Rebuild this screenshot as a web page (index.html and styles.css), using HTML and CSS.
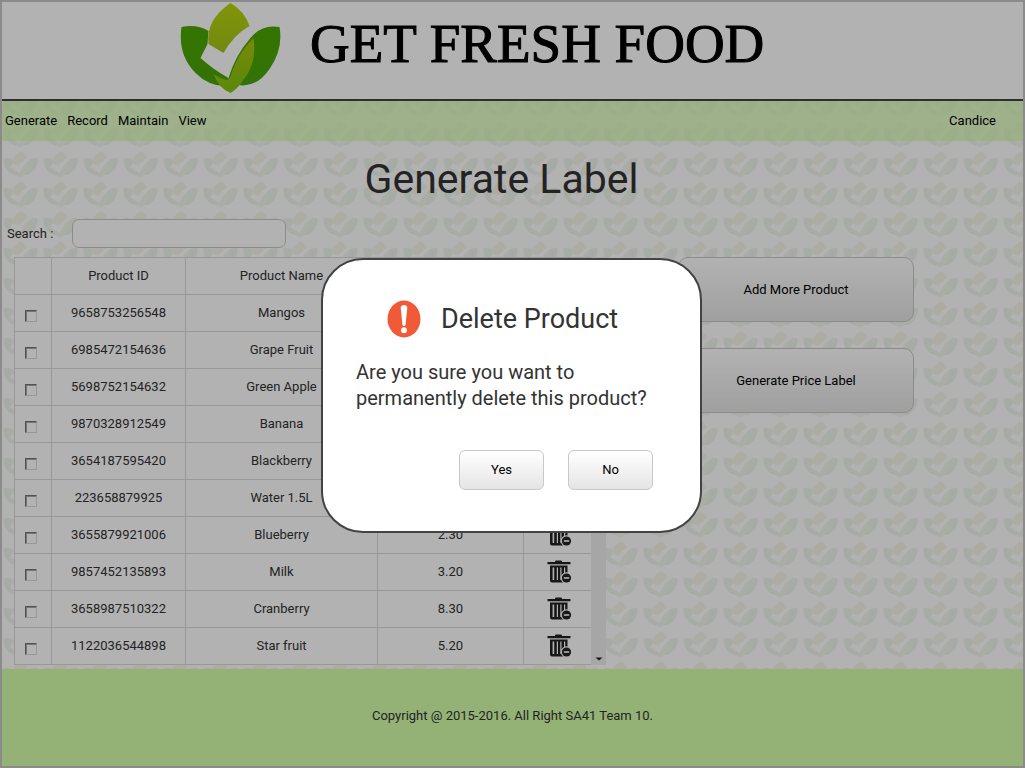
FILE: index.html
```html
<!DOCTYPE html>
<html lang="en">
<head>
<meta charset="utf-8">
<title>Get Fresh Food - Generate Label</title>
<link rel="stylesheet" href="styles.css">
</head>
<body>
<svg class="defs" aria-hidden="true">
  <symbol id="trash" viewBox="0 0 25 23">
    <path fill="#222" d="M8 2V1.500Q8 .5 9.500.5H13.500Q15 .5 15 1.500V2H23.500V4.200H.5V2Z"/>
    <path fill="#222" fill-rule="evenodd" d="M3 5.500H20.500V20Q20.500 22.500 18.500 22.500H5Q3 22.500 3 20.500ZM5.600 7.500V20H7.200V7.500ZM9.800 7.500V20H11V7.500ZM13.300 7.500V20H14.500V7.500ZM17 7.500V20H18.200V7.500Z"/>
    <circle cx="19.500" cy="18" r="5.800" fill="#fff"/>
    <circle cx="19.500" cy="18" r="4.600" fill="#222"/>
    <path stroke="#fff" stroke-width="1.600" d="M16.800 18H22.200"/>
  </symbol>
</svg>
<div class="page">
  <header class="banner">
    <svg class="logo" viewBox="0 0 100 92" role="img" aria-label="Get Fresh Food logo">
      <defs>
        <linearGradient id="lime" x1="0" y1="0" x2="0" y2="1"><stop offset="0" stop-color="#b9d60c"/><stop offset="1" stop-color="#a4c41a"/></linearGradient>
        <linearGradient id="green" x1="0" y1="0" x2="0" y2="1"><stop offset="0" stop-color="#4aa800"/><stop offset="1" stop-color="#48a40c"/></linearGradient>
        <linearGradient id="stem" x1="0" y1="0" x2="0" y2="1"><stop offset="0" stop-color="#b0c40c"/><stop offset="1" stop-color="#80c410"/></linearGradient>
      </defs>
      <path fill="url(#green)" d="M1 25Q17 22 28 29L27 42L20 56Q32 67 48 76L50 84Q30 86 15 71Q-3 53 1 25Z"/>
      <path fill="url(#green)" d="M99 25Q81 22 70 36Q55 53 48 76L58 83Q76 86 89 67Q103 47 99 25Z"/>
      <path fill="url(#stem)" d="M73 36Q77 62 62 79Q57 87 50 91Q38 86 33 72Q40 77 47 78L49 77Q57 51 73 36Z"/>
      <path fill="url(#lime)" d="M50 1Q64 9 69 24Q53 33 43 51L28 42Q25 18 50 1Z"/>
    </svg>
    <span class="brand">GET FRESH FOOD</span>
  </header>
  <nav class="menu">
    <ul class="menu-links">
      <li><a href="#generate">Generate</a></li>
      <li><a href="#record">Record</a></li>
      <li><a href="#maintain">Maintain</a></li>
      <li><a href="#view">View</a></li>
    </ul>
    <a class="user" href="#account">Candice</a>
  </nav>
  <main class="content">
    <h1>Generate Label</h1>
    <div class="search">
      <label for="search">Search :</label>
      <input id="search" type="text">
    </div>
    <div class="columns">
      <div class="list">
        <table>
          <colgroup><col class="c-check"><col class="c-id"><col class="c-name"><col class="c-price"><col class="c-delete"></colgroup>
          <thead>
            <tr><th></th><th>Product ID</th><th>Product Name</th><th>Price</th><th></th></tr>
          </thead>
          <tbody>
            <tr><td><input type="checkbox" aria-label="Mangos"></td><td>9658753256548</td><td>Mangos</td><td></td><td><button class="trash" aria-label="Delete Mangos"><svg><use href="#trash"/></svg></button></td></tr>
            <tr><td><input type="checkbox" aria-label="Grape Fruit"></td><td>6985472154636</td><td>Grape Fruit</td><td></td><td><button class="trash" aria-label="Delete Grape Fruit"><svg><use href="#trash"/></svg></button></td></tr>
            <tr><td><input type="checkbox" aria-label="Green Apple"></td><td>5698752154632</td><td>Green Apple</td><td></td><td><button class="trash" aria-label="Delete Green Apple"><svg><use href="#trash"/></svg></button></td></tr>
            <tr><td><input type="checkbox" aria-label="Banana"></td><td>9870328912549</td><td>Banana</td><td></td><td><button class="trash" aria-label="Delete Banana"><svg><use href="#trash"/></svg></button></td></tr>
            <tr><td><input type="checkbox" aria-label="Blackberry"></td><td>3654187595420</td><td>Blackberry</td><td></td><td><button class="trash" aria-label="Delete Blackberry"><svg><use href="#trash"/></svg></button></td></tr>
            <tr><td><input type="checkbox" aria-label="Water 1.5L"></td><td>223658879925</td><td>Water 1.5L</td><td></td><td><button class="trash" aria-label="Delete Water 1.5L"><svg><use href="#trash"/></svg></button></td></tr>
            <tr><td><input type="checkbox" aria-label="Blueberry"></td><td>3655879921006</td><td>Blueberry</td><td>2.30</td><td><button class="trash" aria-label="Delete Blueberry"><svg><use href="#trash"/></svg></button></td></tr>
            <tr><td><input type="checkbox" aria-label="Milk"></td><td>9857452135893</td><td>Milk</td><td>3.20</td><td><button class="trash" aria-label="Delete Milk"><svg><use href="#trash"/></svg></button></td></tr>
            <tr><td><input type="checkbox" aria-label="Cranberry"></td><td>3658987510322</td><td>Cranberry</td><td>8.30</td><td><button class="trash" aria-label="Delete Cranberry"><svg><use href="#trash"/></svg></button></td></tr>
            <tr><td><input type="checkbox" aria-label="Star fruit"></td><td>1122036544898</td><td>Star fruit</td><td>5.20</td><td><button class="trash" aria-label="Delete Star fruit"><svg><use href="#trash"/></svg></button></td></tr>
          </tbody>
        </table>
        <div class="scrollbar" aria-hidden="true">
          <svg viewBox="0 0 8 4"><path fill="#222" d="M4 .5L7.500 3.500H.5Z"/></svg>
          <svg viewBox="0 0 8 4"><path fill="#222" d="M.5.5H7.500L4 3.500Z"/></svg>
        </div>
      </div>
      <div class="actions">
        <button class="btn large">Add More Product</button>
        <button class="btn large">Generate Price Label</button>
      </div>
    </div>
  </main>
  <footer class="footer">Copyright @ 2015-2016. All Right SA41 Team 10.</footer>
</div>
<div class="overlay">
  <section class="dialog" role="dialog" aria-modal="true" aria-labelledby="dialog-title">
    <div class="dialog-head">
      <svg class="alert" viewBox="0 0 34 38" aria-hidden="true">
        <ellipse cx="17" cy="19" rx="16.500" ry="18.500" fill="#f05a38"/>
        <path fill="#fff" d="M13.700 7.500Q14 5 17 5T20.300 7.500L18.600 24.500Q18.400 26 17 26T15.400 24.500Z"/>
        <ellipse cx="17" cy="30.300" rx="2.900" ry="3" fill="#fff"/>
      </svg>
      <h2 id="dialog-title">Delete Product</h2>
    </div>
    <p>Are you sure you want to permanently delete this product?</p>
    <div class="dialog-buttons">
      <button class="btn">Yes</button>
      <button class="btn">No</button>
    </div>
  </section>
</div>
</body>
</html>
```
FILE: styles.css
```css
* { box-sizing: border-box; }

body {
  margin: 0;
  color: #333;
  font: 13px/16px Roboto, "Liberation Sans", sans-serif;
  background: #fff url("data:image/svg+xml,%3Csvg xmlns='http://www.w3.org/2000/svg' width='40' height='30'%3E%3Cg transform='translate(3 1) scale(.35 .29)' opacity='.08'%3E%3Cpath fill='%23207a10' d='M2 25Q17 22 28 29L27 42L20 56Q32 67 48 76L47 84Q30 85 17 72Q-1 53 2 25Z'/%3E%3Cpath fill='%23207a10' d='M98 25Q81 22 70 36Q55 53 48 76L58 83Q76 84 88 66Q101 47 98 25Z'/%3E%3Cpath fill='%2370a020' d='M73 36Q77 62 62 79Q57 87 50 91Q38 86 33 72Q40 77 47 78L49 77Q57 51 73 36Z'/%3E%3Cpath fill='%23909800' d='M50 1Q64 9 69 24Q53 33 43 51L28 42Q25 18 50 1Z'/%3E%3C/g%3E%3C/svg%3E");
}

h1, h2, p, ul { margin: 0; padding: 0; font-weight: 400; }
a { color: #000; text-decoration: none; }
button, input { font: inherit; margin: 0; }

.defs { position: absolute; width: 0; height: 0; }

.page {
  display: flex;
  flex-direction: column;
  min-height: 100vh;
  border: 2px solid #c8c8c8;
}

.banner {
  display: flex;
  align-items: flex-start;
  gap: 29px;
  height: 99px;
  padding-left: 178px;
  background: #fff;
  border-bottom: 2px solid #434343;
}
.logo { width: 101px; height: 92px; }
.brand {
  color: #000;
  font: 55px/84px "Liberation Serif", serif;
  -webkit-text-stroke: 1px #000;
  white-space: nowrap;
}

.menu {
  display: flex;
  justify-content: space-between;
  align-items: center;
  height: 40px;
  padding: 0 27px 0 3px;
  background: rgba(212, 254, 170, .65);
}
.menu-links { display: flex; gap: 10px; list-style: none; }

.content { padding: 14px 5px 4px; }
h1 { width: 989px; max-width: 100%; font-size: 41px; line-height: 48px; text-align: center; }

.search { display: flex; align-items: center; gap: 19px; margin-top: 16px; }
.search input {
  width: 214px;
  height: 29px;
  padding: 0 8px;
  background: #fff;
  border: 1px solid #c8c8c8;
  border-radius: 7px;
}

.columns { display: flex; gap: 72px; margin: 9px 0 0 7px; }
.list { display: flex; }
table {
  width: 577px;
  table-layout: fixed;
  border-spacing: 0;
  border: solid #dadada;
  border-width: 1px 0 0 1px;
  background: #fff;
}
.c-check { width: 37px; }
.c-id { width: 134px; }
.c-name { width: 192px; }
.c-price { width: 146px; }
.c-delete { width: 67px; }
th, td {
  height: 37px;
  padding: 0;
  font-weight: 400;
  text-align: center;
  border: solid #dadada;
  border-width: 0 1px 1px 0;
}
th:last-child, td:last-child { border-right: 0; }
td input {
  display: block;
  appearance: none;
  width: 12px;
  height: 12px;
  margin: 5px auto 0 10px;
  border: 1px solid;
  border-color: #70747a #d8d8d8 #d8d8d8 #70747a;
  box-shadow: inset 1px 1px #a8a8a8;
}
.trash { display: block; margin: 0 0 2px 23px; padding: 0; border: 0; background: none; }
.trash svg { display: block; width: 25px; height: 23px; }

.scrollbar {
  display: flex;
  flex-direction: column;
  justify-content: space-between;
  align-items: center;
  width: 15px;
  padding: 4px 0;
  background: #eeeef0;
}
.scrollbar svg { width: 8px; height: 4px; }

.actions { display: flex; flex-direction: column; gap: 26px; }
.btn {
  width: 85px;
  height: 40px;
  padding: 0;
  color: #000;
  background: linear-gradient(#fff, #e5e5e5);
  border: 1px solid #c8c8c8;
  border-radius: 6px;
}
.btn.large { width: 236px; height: 65px; border-radius: 10px; }

.footer {
  flex: 1;
  padding-top: 39px;
  text-align: center;
  background: #d4feaa;
}

.overlay {
  position: fixed;
  inset: 0;
  display: flex;
  justify-content: center;
  align-items: flex-start;
  padding: 258px 2px 0 0;
  background: rgba(0, 0, 0, .3);
}
.dialog {
  width: 381px;
  padding: 40px 47px 41px 33px;
  background: #fff;
  border: 2px solid #434343;
  border-radius: 42px;
}
.dialog-head { display: flex; align-items: center; gap: 20px; padding-left: 31px; }
.alert { width: 34px; height: 38px; }
h2 { font-size: 27px; line-height: 38px; }
.dialog p { margin-top: 21px; font-size: 20px; line-height: 26px; }
.dialog-buttons { display: flex; justify-content: flex-end; gap: 24px; margin-top: 39px; }
```
